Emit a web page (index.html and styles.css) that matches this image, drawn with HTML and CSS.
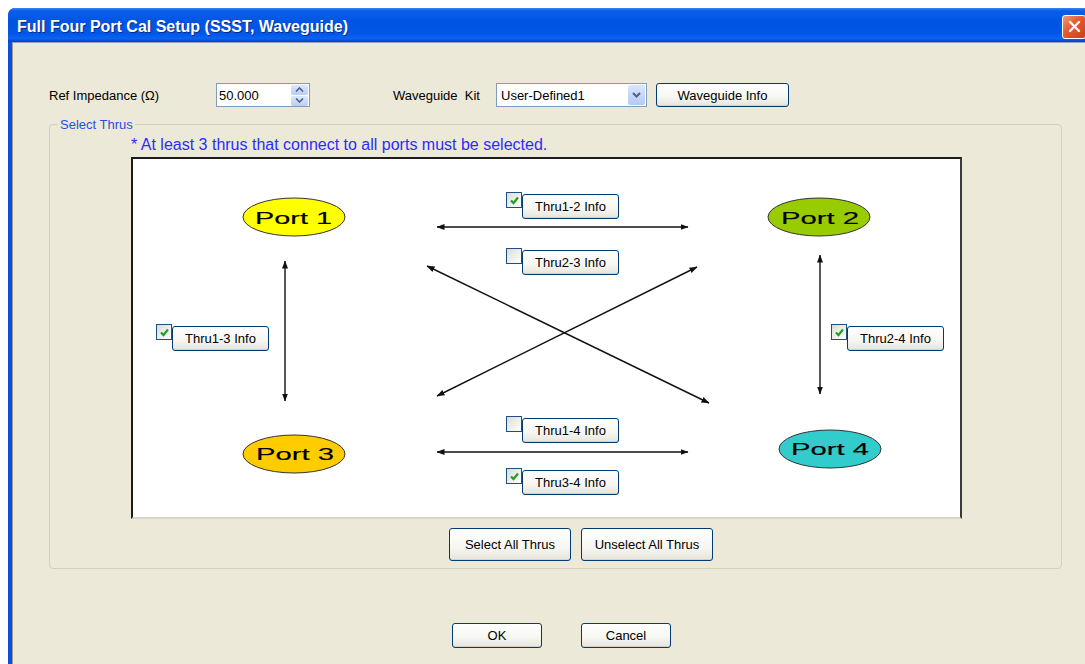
FILE: index.html
```html
<!DOCTYPE html>
<html>
  <head>
    <title>Full Four Port Cal Setup (SSST, Waveguide)</title>
    <link rel="stylesheet" href="styles.css">
  </head>
  <body>
    <div class="window">
      <div class="titlebar">
        <span class="title">Full Four Port Cal Setup (SSST, Waveguide)</span>
        <span class="close">
          <svg width="13" height="13" viewBox="0 0 13 13">
            <path d="M2 2 L11 11 M11 2 L2 11" stroke="#fff" stroke-width="2.4" stroke-linecap="round" />
          </svg>
        </span>
      </div>

      <div class="client">
        <div class="top-row">
          <label class="lbl-imp">Ref Impedance (&Omega;)</label>
          <div class="spin">
            <span class="spin-value">50.000</span>
            <span class="spin-btns">
              <span class="spin-btn">
                <svg width="9" height="5" viewBox="0 0 9 5"><path d="M1 4.5 L4.5 1 L8 4.5" fill="none" stroke="#4d6185" stroke-width="1.6" /></svg>
              </span>
              <span class="spin-btn">
                <svg width="9" height="5" viewBox="0 0 9 5"><path d="M1 0.5 L4.5 4 L8 0.5" fill="none" stroke="#4d6185" stroke-width="1.6" /></svg>
              </span>
            </span>
          </div>
          <label class="lbl-kit">Waveguide  Kit</label>
          <div class="combo">
            <span class="combo-value">User-Defined1</span>
            <span class="combo-btn">
              <svg width="9" height="6" viewBox="0 0 9 6"><path d="M1 1 L4.5 4.5 L8 1" fill="none" stroke="#4d6185" stroke-width="2" /></svg>
            </span>
          </div>
          <button class="btn btn-wg">Waveguide Info</button>
        </div>

        <fieldset class="group">
          <legend>Select Thrus</legend>
          <div class="group-body">
            <div class="note">* At least 3 thrus that connect to all ports must be selected.</div>

            <div class="canvas">
              <svg class="diagram" width="827" height="358" viewBox="133 159 827 358">
                <defs>
                  <marker id="head" viewBox="0 0 8 6" refX="7.5" refY="3" markerWidth="8" markerHeight="6" markerUnits="userSpaceOnUse" orient="auto-start-reverse">
                    <path d="M0 0 L8 3 L0 6 Z" fill="#111" />
                  </marker>
                </defs>
                <g stroke="#111" stroke-width="1.4" marker-start="url(#head)" marker-end="url(#head)">
                  <line x1="437" y1="227" x2="688" y2="227" />
                  <line x1="437" y1="452" x2="688" y2="452" />
                  <line x1="285" y1="261" x2="285" y2="401" />
                  <line x1="820" y1="255" x2="820" y2="394" />
                  <line x1="427" y1="266" x2="709" y2="403" />
                  <line x1="697" y1="267" x2="437" y2="396" />
                </g>

                <g class="ports" stroke="#333" stroke-width="1">
                  <ellipse cx="294" cy="217" rx="51" ry="19" fill="#ffff00" />
                  <ellipse cx="819" cy="217" rx="51" ry="19" fill="#99cc00" />
                  <ellipse cx="294" cy="454" rx="51" ry="19" fill="#ffcc00" />
                  <ellipse cx="830" cy="449" rx="51" ry="19" fill="#33cccc" />
                </g>
                <g class="port-text">
                  <text x="255" y="224" textLength="77" lengthAdjust="spacingAndGlyphs">Port 1</text>
                  <text x="781" y="224" textLength="78" lengthAdjust="spacingAndGlyphs">Port 2</text>
                  <text x="256" y="460" textLength="78" lengthAdjust="spacingAndGlyphs">Port 3</text>
                  <text x="791" y="455" textLength="78" lengthAdjust="spacingAndGlyphs">Port 4</text>
                </g>
              </svg>

              <div class="thru t12">
                <span class="check on"><svg width="11" height="11" viewBox="0 0 11 11"><path d="M2 5.5 L4.5 8 L9 2.5" fill="none" stroke="#21a121" stroke-width="2.2" /></svg></span>
                <button class="btn btn-thru">Thru1-2 Info</button>
              </div>
              <div class="thru t23">
                <span class="check"></span>
                <button class="btn btn-thru">Thru2-3 Info</button>
              </div>
              <div class="thru t13">
                <span class="check on"><svg width="11" height="11" viewBox="0 0 11 11"><path d="M2 5.5 L4.5 8 L9 2.5" fill="none" stroke="#21a121" stroke-width="2.2" /></svg></span>
                <button class="btn btn-thru">Thru1-3 Info</button>
              </div>
              <div class="thru t24">
                <span class="check on"><svg width="11" height="11" viewBox="0 0 11 11"><path d="M2 5.5 L4.5 8 L9 2.5" fill="none" stroke="#21a121" stroke-width="2.2" /></svg></span>
                <button class="btn btn-thru">Thru2-4 Info</button>
              </div>
              <div class="thru t14">
                <span class="check"></span>
                <button class="btn btn-thru">Thru1-4 Info</button>
              </div>
              <div class="thru t34">
                <span class="check on"><svg width="11" height="11" viewBox="0 0 11 11"><path d="M2 5.5 L4.5 8 L9 2.5" fill="none" stroke="#21a121" stroke-width="2.2" /></svg></span>
                <button class="btn btn-thru">Thru3-4 Info</button>
              </div>
            </div>

            <div class="group-buttons">
              <button class="btn btn-all">Select All Thrus</button>
              <button class="btn btn-none">Unselect All Thrus</button>
            </div>
          </div>
        </fieldset>

        <div class="dialog-buttons">
          <button class="btn btn-ok">OK</button>
          <button class="btn btn-ok">Cancel</button>
        </div>
      </div>
    </div>
  </body>
</html>
```

FILE: styles.css
```css
html,
body {
  margin: 0;
  padding: 0;
  background-color: #fff;
  overflow: hidden;
}

body {
  font-family: "Liberation Sans", Arial, sans-serif;
  font-size: 13px;
  color: #000;
}

.window {
  margin: 8px 0 0 8px;
  width: 1083px;
  height: 700px;
  background-color: #0a4fe0;
  border-radius: 7px 7px 0 0;
  box-sizing: border-box;
  padding-left: 4px;
}

.titlebar {
  margin-left: -4px;
  height: 34px;
  display: flex;
  align-items: center;
  padding: 0 5px 0 9px;
  border-radius: 7px 7px 0 0;
  background: linear-gradient(#3b86f5 0%, #0a5fea 8%, #0054e3 40%, #0057e6 75%, #0b63f2 90%, #003fc4 100%);
}

.title {
  flex: 1;
  color: #fff;
  font-weight: bold;
  font-size: 16px;
  text-shadow: 1px 1px 0 #0b2a8a;
  margin-top: 4px;
}

.close {
  width: 22px;
  height: 22px;
  border: 1px solid #fff;
  border-radius: 3px;
  background: linear-gradient(135deg, #f29a76 0%, #e25a2e 45%, #c7401a 100%);
  display: flex;
  align-items: center;
  justify-content: center;
  margin-top: 3px;
}

.client {
  height: 660px;
  background-color: #ece9d8;
  border-top: 1px solid #9aa3b6;
  border-left: 1px solid #a59e86;
  padding: 40px 0 0 36px;
  box-sizing: border-box;
}

.top-row {
  display: flex;
  align-items: center;
  height: 24px;
}

.lbl-imp {
  width: 167px;
}

.spin {
  width: 94px;
  height: 24px;
  box-sizing: border-box;
  border: 1px solid #7f9db9;
  background-color: #fff;
  display: flex;
  align-items: center;
  padding-left: 2px;
}

.spin-value {
  flex: 1;
}

.spin-btns {
  display: flex;
  flex-direction: column;
  gap: 1px;
  margin-right: 1px;
}

.spin-btn {
  width: 17px;
  height: 10px;
  border-radius: 2px;
  background: linear-gradient(#dde8fd, #b9cdf7);
  display: flex;
  align-items: center;
  justify-content: center;
}

.lbl-kit {
  white-space: pre;
  margin-left: 83px;
  width: 103px;
}

.combo {
  width: 151px;
  height: 24px;
  box-sizing: border-box;
  border: 1px solid #7f9db9;
  background-color: #fff;
  display: flex;
  align-items: center;
  padding-left: 4px;
}

.combo-value {
  flex: 1;
}

.combo-btn {
  width: 17px;
  height: 20px;
  margin-right: 1px;
  border-radius: 2px;
  background: linear-gradient(#dbe6fd, #b4c9f6);
  display: flex;
  align-items: center;
  justify-content: center;
}

.btn {
  font-family: "Liberation Sans", Arial, sans-serif;
  font-size: 13px;
  color: #000;
  border: 1px solid #003c74;
  border-radius: 3px;
  background: linear-gradient(#ffffff 0%, #f6f6f2 60%, #e6e4da 100%);
  box-shadow: inset 0 -1px 0 #d6d0c5;
  padding: 0;
  box-sizing: border-box;
}

.btn-wg {
  margin-left: 9px;
  width: 133px;
  height: 24px;
}

.group {
  margin: 10px 0 0 0;
  width: 1013px;
  box-sizing: border-box;
  border: 1px solid #d0d0bf;
  border-radius: 4px;
  padding: 0 0 7px 8px;
}

.group legend {
  color: #1f52dc;
  padding: 0 2px;
  line-height: 15px;
}

.group-body {
  padding-left: 73px;
}

.note {
  color: #2c2cff;
  font-size: 16px;
  line-height: 16px;
  margin-top: 5px;
}

.canvas {
  position: relative;
  margin-top: 4px;
  width: 831px;
  height: 362px;
  box-sizing: border-box;
  background-color: #fff;
  border-top: 2px solid #1c1c1c;
  border-left: 2px solid #1c1c1c;
  border-right: 2px solid #3a3a3a;
  border-bottom: 2px solid #d6d4cc;
}

.diagram {
  display: block;
}

.port-text text {
  font-family: "Liberation Sans", Arial, sans-serif;
  font-size: 17px;
  fill: #000;
  stroke: #000;
  stroke-width: 0.15;
}

.thru {
  position: absolute;
  display: flex;
  align-items: flex-start;
}

.t12 { left: 373px; top: 33px; }
.t23 { left: 373px; top: 89px; }
.t13 { left: 23px; top: 165px; }
.t24 { left: 698px; top: 165px; }
.t14 { left: 373px; top: 257px; }
.t34 { left: 373px; top: 309px; }

.check {
  width: 16px;
  height: 16px;
  box-sizing: border-box;
  border: 1px solid #1c5180;
  background: linear-gradient(135deg, #dcdcd6, #ffffff);
  display: flex;
  align-items: center;
  justify-content: center;
}

.btn-thru {
  width: 97px;
  height: 25px;
  margin-top: 2px;
}

.group-buttons {
  display: flex;
  gap: 10px;
  margin-top: 9px;
  padding-left: 318px;
}

.btn-all {
  width: 122px;
  height: 33px;
}

.btn-none {
  width: 132px;
  height: 33px;
}

.dialog-buttons {
  display: flex;
  gap: 39px;
  margin-top: 54px;
  padding-left: 403px;
}

.btn-ok {
  width: 90px;
  height: 25px;
}
```
